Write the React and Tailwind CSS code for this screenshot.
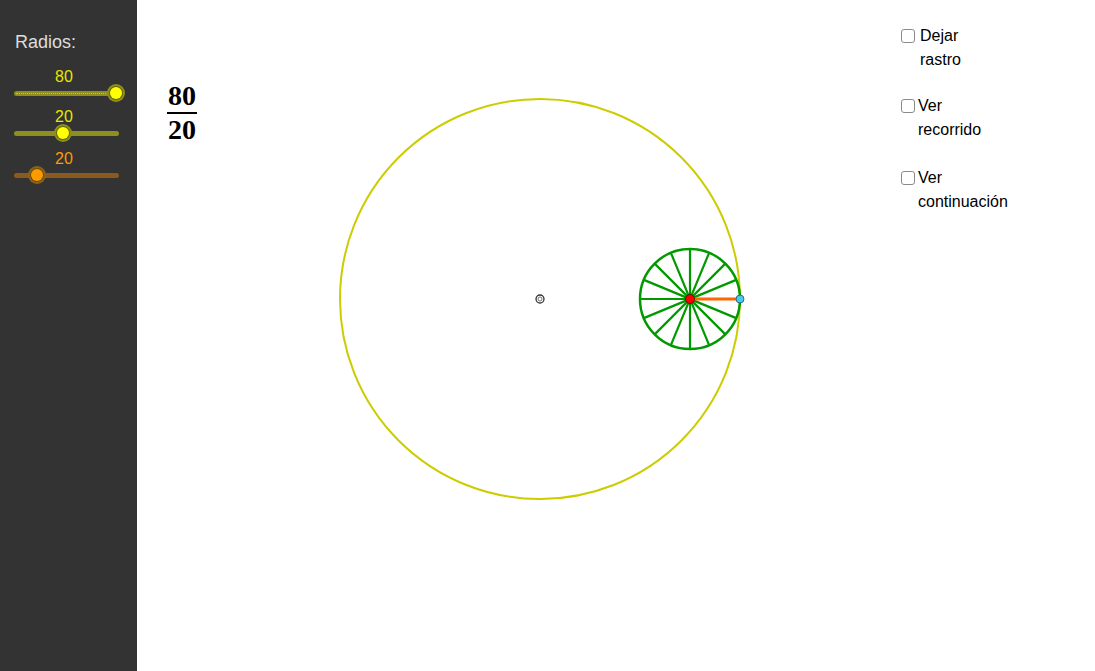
import React from "react";

function Slider({ value, valueColor, trackColor, haloColor, thumbColor, thumbX, trackEnd = 119, dotted = false, mt }) {
  return (
    <div className={mt}>
      <div
        className="h-[20px] leading-[20px] text-[16px] w-[100px] ml-[14px] text-center"
        style={{ color: valueColor, fontFamily: '"Liberation Sans", Arial, sans-serif' }}
      >
        {value}
      </div>
      <div className="relative h-[12px]">
        <div
          className="absolute top-[4px] left-[14px] h-[4.5px] rounded-full"
          style={{ width: trackEnd - 14, background: trackColor }}
        />
        {dotted && (
          <div
            className="absolute top-[5.5px] left-[16px] h-[1.5px] border-t-[1.5px] border-dotted border-[#c8c83c]"
            style={{ width: trackEnd - 20 }}
          />
        )}
        <div
          className="absolute top-[-3px] w-[18px] h-[18px] rounded-full flex items-center justify-center"
          style={{ left: thumbX - 9, background: haloColor }}
        >
          <div className="w-[12px] h-[12px] rounded-full" style={{ background: thumbColor, boxShadow: "0 0 0 1px rgba(60,60,0,0.5)" }} />
        </div>
      </div>
    </div>
  );
}

function Check({ top, left, line1, line2, textLeft }) {
  return (
    <div className="absolute" style={{ top, left }}>
      <div className="flex items-start">
        <div className="w-[14px] h-[14px] mt-[0px] border-[1.5px] border-[#8a8a8a] rounded-[3px] bg-white" />
        <div
          className="text-[16px] leading-[24px] -mt-[5px] text-black"
          style={{ marginLeft: textLeft, fontFamily: '"Liberation Sans", Arial, sans-serif' }}
        >
          <div>{line1}</div>
          <div>{line2}</div>
        </div>
      </div>
    </div>
  );
}

export default function App() {
  const cx = 690, cy = 299, r = 50;
  const spokes = [];
  for (let k = 0; k < 8; k++) {
    const a = (k * Math.PI) / 8;
    spokes.push(
      <line
        key={k}
        x1={cx - r * Math.cos(a)}
        y1={cy - r * Math.sin(a)}
        x2={cx + r * Math.cos(a)}
        y2={cy + r * Math.sin(a)}
        stroke="#009900"
        strokeWidth="2.2"
      />
    );
  }
  return (
    <div className="flex w-[1095px] h-[671px] overflow-hidden bg-white">
      <div className="w-[137px] h-full bg-[#333333] flex flex-col pt-[32px]">
        <div
          className="h-[20px] leading-[20px] text-[18px] text-[#dddddd] pl-[15px]"
          style={{ fontFamily: '"Liberation Sans", Arial, sans-serif' }}
        >
          Radios:
        </div>
        <Slider
          mt="mt-[15px]"
          value="80"
          valueColor="#e6e600"
          trackColor="#8f8f1a"
          haloColor="#8f8f1a"
          thumbColor="#ffff00"
          thumbX={116}
          trackEnd={120}
          dotted
        />
        <Slider
          mt="mt-[8px]"
          value="20"
          valueColor="#e6e600"
          trackColor="#8f8f1f"
          haloColor="#8f8f1a"
          thumbColor="#ffff00"
          thumbX={63}
        />
        <Slider
          mt="mt-[10px]"
          value="20"
          valueColor="#ff9900"
          trackColor="#8a5a1e"
          haloColor="#8f621a"
          thumbColor="#ff9900"
          thumbX={37}
        />
      </div>
      <div className="relative flex-1 h-full">
        <svg className="absolute inset-0" width="958" height="671" viewBox="137 0 958 671">
          <circle cx="540" cy="299" r="200" fill="none" stroke="#cccc00" strokeWidth="2" />
          <circle cx={cx} cy={cy} r={r} fill="none" stroke="#009900" strokeWidth="2.5" />
          {spokes}
          <line x1={cx} y1={cy} x2={cx + r} y2={cy} stroke="#ff6600" strokeWidth="3" />
          <circle cx={cx} cy={cy} r="4.5" fill="#ff0000" stroke="#660000" strokeWidth="0.8" />
          <circle cx={cx + r} cy={cy} r="4" fill="#44ccee" stroke="#225566" strokeWidth="0.8" />
          <circle cx="540" cy="299" r="4" fill="white" stroke="#333333" strokeWidth="1.3" />
          <circle cx="540" cy="299" r="2" fill="white" stroke="#666666" strokeWidth="0.9" />
        </svg>
        <div
          className="absolute left-[30px] top-[81px] w-[30px] flex flex-col items-center text-black font-bold"
          style={{ fontFamily: '"Liberation Serif", "Times New Roman", serif' }}
        >
          <div className="text-[28px] leading-[30px]">80</div>
          <div className="w-[30px] h-[1.5px] bg-black mt-[1px]" />
          <div className="text-[28px] leading-[30px] mt-[1px]">20</div>
        </div>
        <Check top={29} left={764} line1="Dejar" line2="rastro" textLeft={5} />
        <Check top={99} left={764} line1="Ver" line2="recorrido" textLeft={3} />
        <Check top={171} left={764} line1="Ver" line2="continuación" textLeft={3} />
      </div>
    </div>
  );
}
